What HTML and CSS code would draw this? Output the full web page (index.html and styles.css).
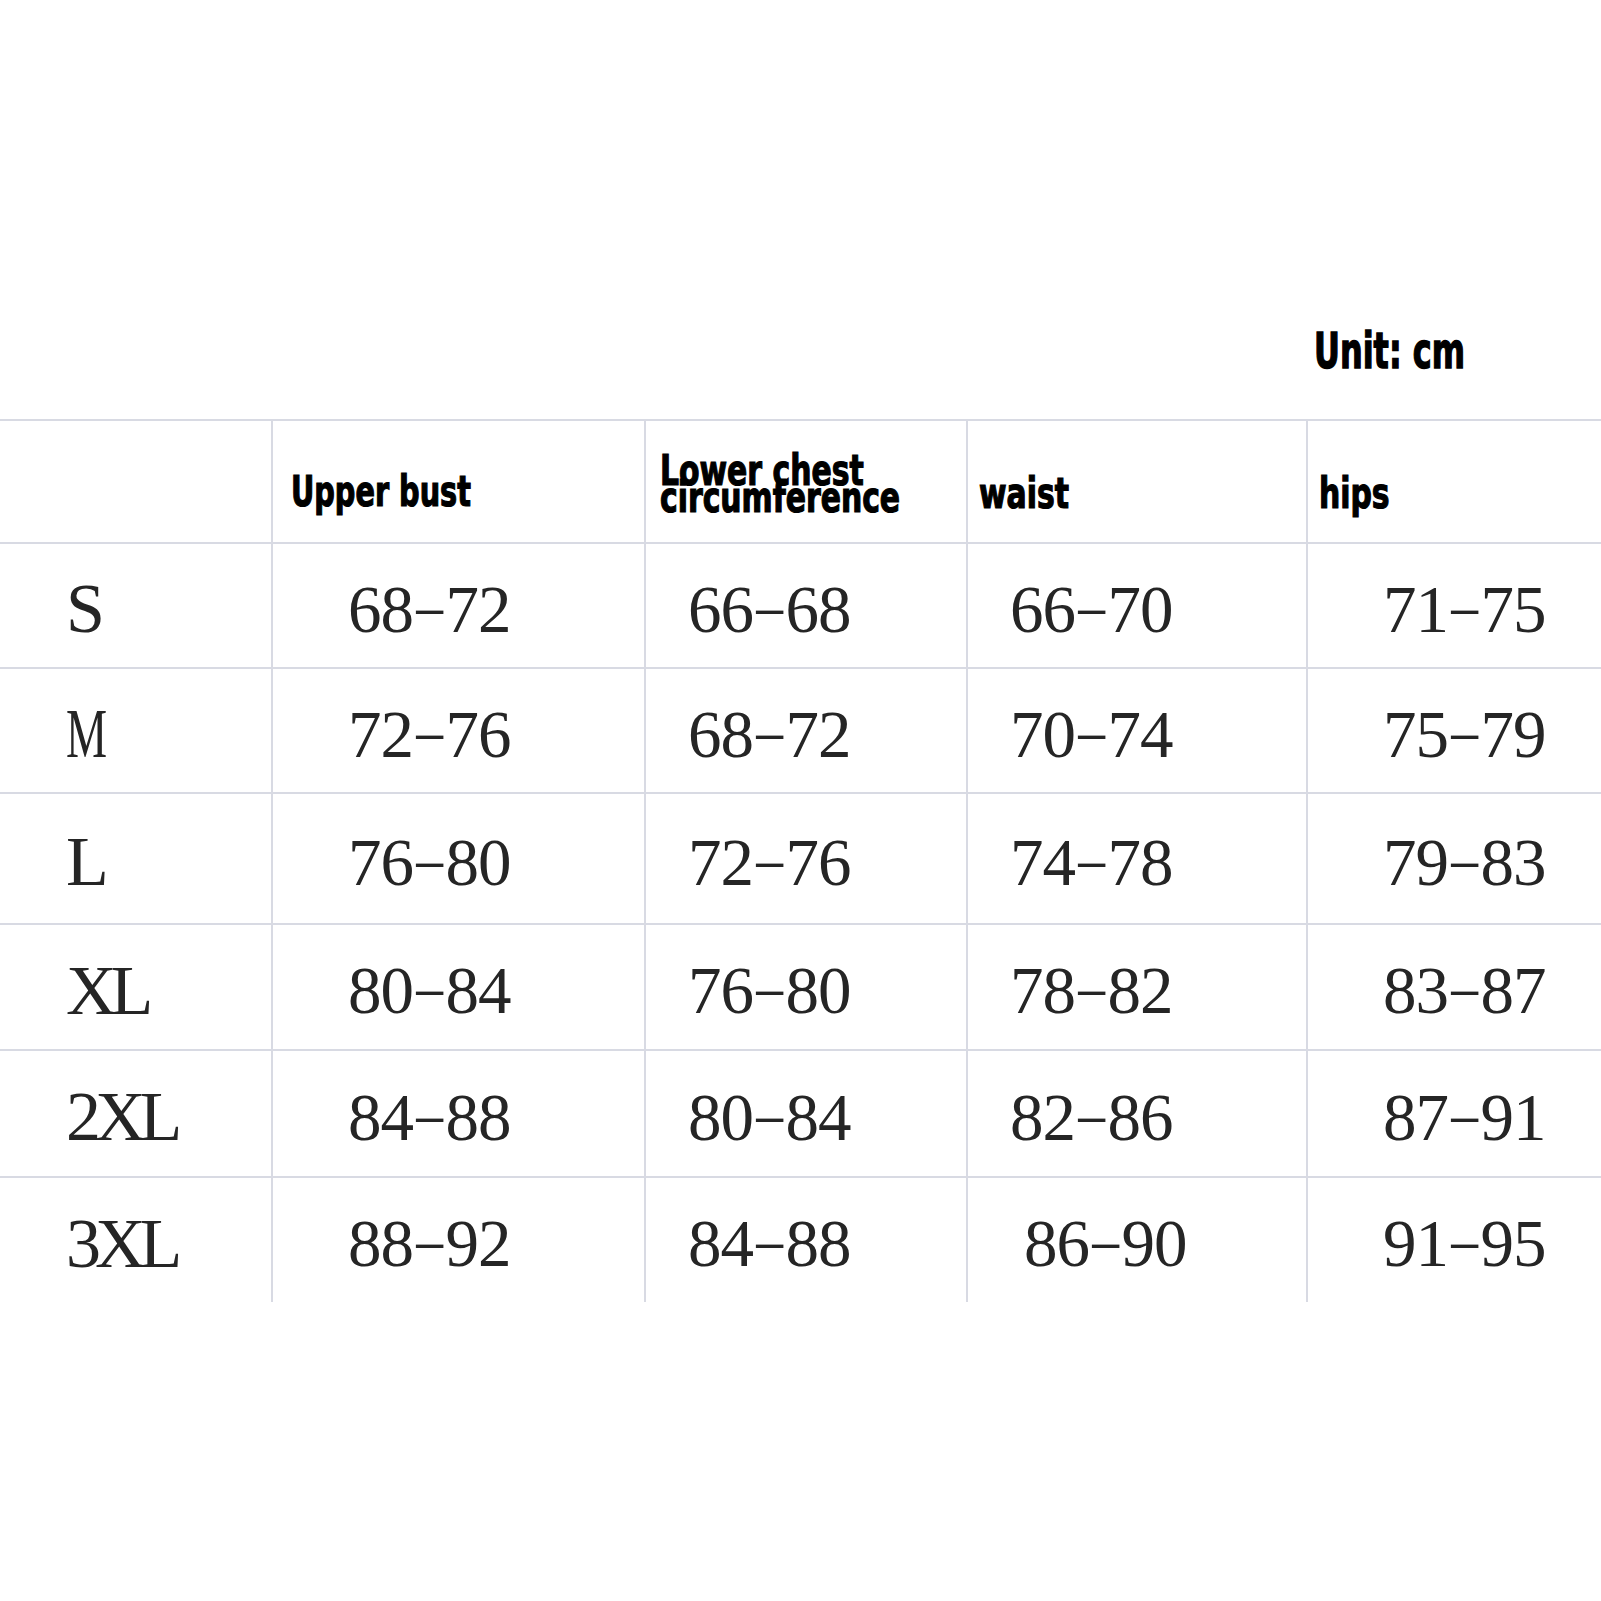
FILE: index.html
```html
<!DOCTYPE html>
<html lang="en">
<head>
<meta charset="utf-8">
<title>Size chart</title>
<link rel="stylesheet" href="styles.css">
</head>
<body>
<div class="page">
  <div class="unit"><span class="squeeze unit-text">Unit: cm</span></div>
  <div class="chart">
    <div class="cell head c1"></div>
    <div class="cell head c2 h-upper"><span class="squeeze sq-upper">Upper bust</span></div>
    <div class="cell head c3 h-lower"><span class="squeeze sq-lower"><span class="ln">Lower chest</span><span class="ln">circumference</span></span></div>
    <div class="cell head c4 h-waist"><span class="squeeze">waist</span></div>
    <div class="cell head c5 h-hips"><span class="squeeze">hips</span></div>

    <div class="cell size c1">S</div>
    <div class="cell num c2">68<span class="d">–</span>72</div>
    <div class="cell num c3">66<span class="d">–</span>68</div>
    <div class="cell num c4">66<span class="d">–</span>70</div>
    <div class="cell num c5">71<span class="d">–</span>75</div>

    <div class="cell size c1"><span class="narrow-m">M</span></div>
    <div class="cell num c2">72<span class="d">–</span>76</div>
    <div class="cell num c3">68<span class="d">–</span>72</div>
    <div class="cell num c4">70<span class="d">–</span>74</div>
    <div class="cell num c5">75<span class="d">–</span>79</div>

    <div class="cell size c1">L</div>
    <div class="cell num c2">76<span class="d">–</span>80</div>
    <div class="cell num c3">72<span class="d">–</span>76</div>
    <div class="cell num c4">74<span class="d">–</span>78</div>
    <div class="cell num c5">79<span class="d">–</span>83</div>

    <div class="cell size c1">XL</div>
    <div class="cell num c2">80<span class="d">–</span>84</div>
    <div class="cell num c3">76<span class="d">–</span>80</div>
    <div class="cell num c4">78<span class="d">–</span>82</div>
    <div class="cell num c5">83<span class="d">–</span>87</div>

    <div class="cell size c1">2XL</div>
    <div class="cell num c2">84<span class="d">–</span>88</div>
    <div class="cell num c3">80<span class="d">–</span>84</div>
    <div class="cell num c4">82<span class="d">–</span>86</div>
    <div class="cell num c5">87<span class="d">–</span>91</div>

    <div class="cell size c1">3XL</div>
    <div class="cell num c2">88<span class="d">–</span>92</div>
    <div class="cell num c3">84<span class="d">–</span>88</div>
    <div class="cell num c4 shift">86<span class="d">–</span>90</div>
    <div class="cell num c5">91<span class="d">–</span>95</div>
  </div>
</div>
</body>
</html>
```

FILE: styles.css
```css
html, body {
  margin: 0;
  padding: 0;
  background: #ffffff;
}

.page {
  width: 1601px;
  height: 1601px;
  overflow: hidden;
}

.squeeze {
  display: inline-block;
  transform-origin: left center;
  transform: scaleX(0.79);
}

.unit {
  padding-top: 327px;
  padding-left: 1314px;
  height: 49px;
  font-family: "Liberation Sans Narrow", "DejaVu Sans Condensed", "Liberation Sans", sans-serif;
  font-weight: 700;
  font-size: 50px;
  line-height: 49px;
  color: #000;
  -webkit-text-stroke: 1.4px #000;
  white-space: nowrap;
}

.unit-text { transform: scaleX(0.71); }

.chart {
  margin-top: 43px;
  display: grid;
  grid-template-columns: 271px 373px 322px 340px 1fr;
  grid-template-rows: 123px 125px 125px 131px 126px 127px 126px;
}

.cell {
  box-sizing: border-box;
  border-top: 2px solid #d8dae3;
  display: flex;
  align-items: center;
  white-space: nowrap;
}

.c2, .c3, .c4, .c5 {
  border-left: 2px solid #d8dae3;
}

.head {
  align-items: flex-start;
  font-family: "Liberation Sans Narrow", "DejaVu Sans Condensed", "Liberation Sans", sans-serif;
  font-weight: 700;
  font-size: 42px;
  line-height: 42px;
  color: #000;
  -webkit-text-stroke: 1.2px #000;
}

.sq-upper { transform: scaleX(0.76); }

.ln {
  display: block;
  line-height: 27px;
  height: 27px;
}

.h-upper { padding-top: 50px; padding-left: 18px; }
.h-lower { padding-top: 36px; padding-left: 14px; }
.h-waist { padding-top: 52px; padding-left: 11px; }
.h-hips  { padding-top: 52px; padding-left: 11px; }

.size, .num {
  font-family: "Liberation Serif", "Times New Roman", serif;
  color: #252525;
  padding-top: 7px;
}

.size {
  font-size: 70px;
  line-height: 70px;
  letter-spacing: -6px;
  padding-left: 66px;
}

.narrow-m {
  display: inline-block;
  transform-origin: left center;
  transform: scaleX(0.66);
}

.num {
  font-size: 67px;
  line-height: 67px;
  letter-spacing: -1px;
}

.d {
  display: inline-block;
  transform: translateY(-4px) scaleX(0.8);
}

.num.c2 { padding-left: 75px; }
.num.c3 { padding-left: 42px; }
.num.c4 { padding-left: 42px; }
.num.c4.shift { padding-left: 56px; }
.num.c5 { padding-left: 75px; }
```
